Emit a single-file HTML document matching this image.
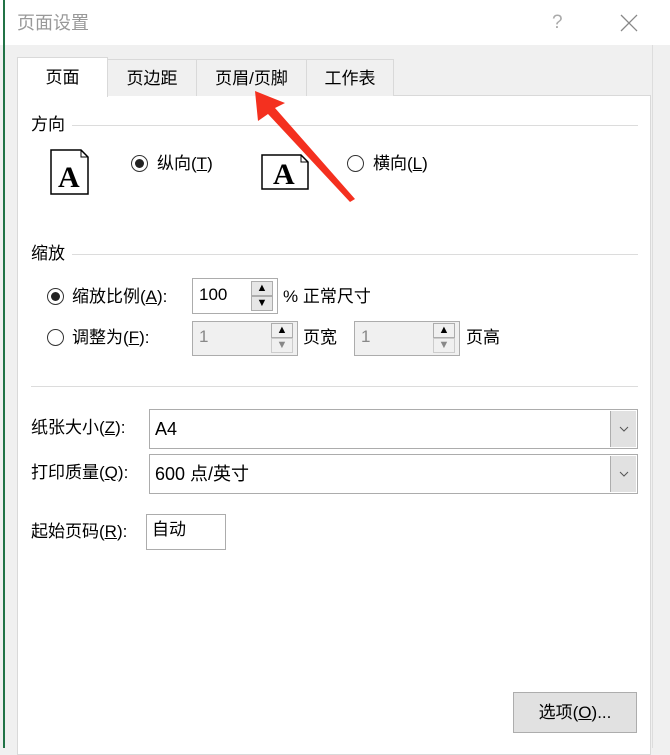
<!DOCTYPE html>
<html><head><meta charset="utf-8"><style>
*{margin:0;padding:0;box-sizing:border-box}
body{width:670px;height:748px;overflow:hidden;background:#f0f0f0;position:relative;font-family:"Liberation Sans","Noto Sans CJK SC",sans-serif;font-size:17px;color:#000}
.a{position:absolute}
.t{position:absolute;line-height:20px;white-space:nowrap}
.tab{position:absolute;top:59px;height:37px;border:1px solid #d9d9d9;border-bottom:none;background:#f0f0f0;text-align:center;line-height:38px;font-size:17px}
.rad{position:absolute;width:17px;height:17px;border:1px solid #333;border-radius:50%;background:#fff}
.rad.on::after{content:"";position:absolute;left:3px;top:3px;width:9px;height:9px;border-radius:50%;background:#222}
.line{position:absolute;height:1px;background:#dcdcdc}
.box{position:absolute;border:1px solid #acacac;background:#fff}
.sp{position:absolute;width:22px;height:15px;background:#e6e6e6;border:1px solid #adadad;font-size:11px;text-align:center;line-height:13px}
.dd{position:absolute;right:1px;top:1px;bottom:1px;width:26px;background:#e1e1e1;border-left:1px solid #adadad}
.dd svg{position:absolute;left:8px;top:15px}
u{text-decoration:underline}
</style></head><body>
<div class="a" style="left:0;top:0;width:670px;height:45px;background:#fff"></div>
<div class="a" style="left:3px;top:0;width:2px;height:748px;background:#217346"></div>
<div class="t" style="left:17px;top:13px;font-size:18px;color:#999">页面设置</div>
<div class="t" style="left:552px;top:13px;font-size:19px;color:#aaa">?</div>
<svg class="a" style="left:620px;top:14px" width="18" height="18"><path d="M1 1L17 17M17 1L1 17" stroke="#888" stroke-width="1.3"/></svg>
<div class="a" style="left:652px;top:45px;width:1px;height:703px;background:#ddd"></div>
<div class="a" style="left:17px;top:95px;width:634px;height:660px;background:#fff;border:1px solid #d9d9d9"></div>
<div class="tab" style="left:17px;top:57px;width:91px;height:40px;background:#fff;line-height:40px;z-index:2">页面</div>
<div class="tab" style="left:107px;width:90px">页边距</div>
<div class="tab" style="left:196px;width:111px">页眉/页脚</div>
<div class="tab" style="left:306px;width:88px">工作表</div>

<div class="t" style="left:31px;top:115px">方向</div>
<div class="line" style="left:72px;top:125px;width:566px"></div>
<svg class="a" style="left:50px;top:149px" width="40" height="47"><path d="M1 1H31L38 8V45H1Z" fill="#fff" stroke="#000" stroke-width="1.5"/><path d="M31 1V8H38" fill="none" stroke="#000"/><text x="8" y="38" font-family="Liberation Serif" font-size="30" font-weight="bold">A</text></svg>
<div class="rad on" style="left:131px;top:155px"></div>
<div class="t" style="left:157px;top:154px">纵向(<u>T</u>)</div>
<svg class="a" style="left:261px;top:154px" width="49" height="37"><path d="M1 1H40L47 8V35H1Z" fill="#fff" stroke="#000" stroke-width="1.5"/><path d="M40 1V8H47" fill="none" stroke="#000"/><text x="12" y="30" font-family="Liberation Serif" font-size="30" font-weight="bold">A</text></svg>
<div class="rad" style="left:347px;top:155px"></div>
<div class="t" style="left:373px;top:154px">横向(<u>L</u>)</div>

<div class="t" style="left:31px;top:244px">缩放</div>
<div class="line" style="left:72px;top:254px;width:566px"></div>
<div class="rad on" style="left:47px;top:288px"></div>
<div class="t" style="left:72px;top:287px">缩放比例(<u>A</u>):</div>
<div class="box" style="left:192px;top:278px;width:86px;height:36px"><div class="t" style="left:6px;top:6px">100</div>
<div class="sp" style="left:58px;top:2px">▲</div><div class="sp" style="left:58px;top:17px">▼</div></div>
<div class="t" style="left:283px;top:287px">% 正常尺寸</div>
<div class="rad" style="left:47px;top:329px"></div>
<div class="t" style="left:72px;top:328px">调整为(<u>F</u>):</div>
<div class="box" style="left:192px;top:321px;width:106px;height:35px;background:#f0f0f0"><div class="t" style="left:6px;top:5px;color:#888">1</div>
<div class="sp" style="left:78px;top:1px;background:#f0f0f0">▲</div><div class="sp" style="left:78px;top:16px;background:#f0f0f0;color:#888;border-color:#ccc">▼</div></div>
<div class="t" style="left:303px;top:328px">页宽</div>
<div class="box" style="left:354px;top:321px;width:106px;height:35px;background:#f0f0f0"><div class="t" style="left:6px;top:5px;color:#888">1</div>
<div class="sp" style="left:78px;top:1px;background:#f0f0f0">▲</div><div class="sp" style="left:78px;top:16px;background:#f0f0f0;color:#888;border-color:#ccc">▼</div></div>
<div class="t" style="left:466px;top:328px">页高</div>

<div class="line" style="left:31px;top:386px;width:607px"></div>
<div class="t" style="left:31px;top:418px">纸张大小(<u>Z</u>):</div>
<div class="box" style="left:149px;top:409px;width:489px;height:40px"><div class="t" style="left:5px;top:9px;font-size:18px">A4</div><div class="dd"><svg width="10" height="6"><path d="M1 1L5 5L9 1" fill="none" stroke="#555"/></svg></div></div>
<div class="t" style="left:31px;top:463px">打印质量(<u>Q</u>):</div>
<div class="box" style="left:149px;top:454px;width:489px;height:40px"><div class="t" style="left:5px;top:9px;font-size:18px">600 点/英寸</div><div class="dd"><svg width="10" height="6"><path d="M1 1L5 5L9 1" fill="none" stroke="#555"/></svg></div></div>
<div class="t" style="left:31px;top:522px">起始页码(<u>R</u>):</div>
<div class="box" style="left:146px;top:514px;width:80px;height:36px"><div class="t" style="left:5px;top:5px">自动</div></div>

<div class="a" style="left:513px;top:692px;width:124px;height:41px;background:#e1e1e1;border:1px solid #adadad;text-align:center;line-height:40px">选项(<u>O</u>)...</div>

<svg class="a" style="left:0;top:0" width="670" height="748"><path d="M255 91L285 103L275 108L355 199L350 202L268 114L258 121Z" fill="#f4301f"/></svg>
</body></html>
